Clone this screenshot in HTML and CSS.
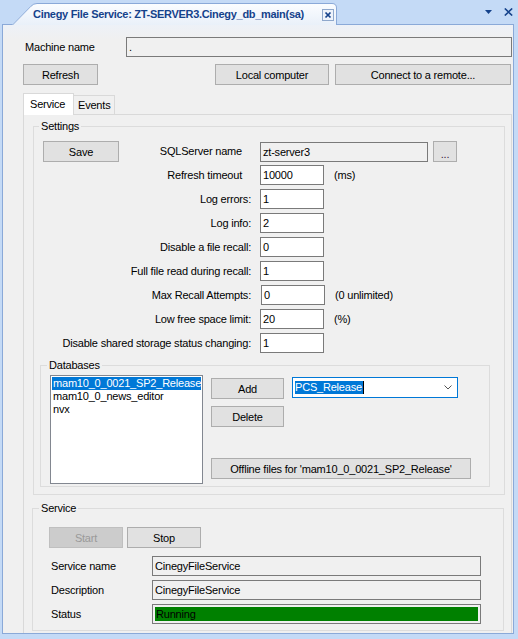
FILE: index.html
```html
<!DOCTYPE html>
<html>
<head>
<meta charset="utf-8">
<title>Cinegy File Service</title>
<link rel="stylesheet" href="styles.css">
</head>
<body>
<div class="titlebar">
  <div class="strip">
    <div class="doctab">
      <svg class="doctab-bg" width="325" height="22" viewBox="0 0 325 22">
        <defs>
          <linearGradient id="tg" x1="0" y1="0" x2="0" y2="1">
            <stop offset="0" stop-color="#fbfdff"/>
            <stop offset="1" stop-color="#e9f0f9"/>
          </linearGradient>
        </defs>
        <path d="M0,22 L19,3 Q21.5,0.5 25,0.5 L320,0.5 Q324.5,0.5 324.5,5 L324.5,22 Z" fill="url(#tg)"/>
        <path d="M0.5,22 L19,3.2 Q21.5,0.5 25,0.5 L320,0.5 Q324.5,0.5 324.5,5 L324.5,22" fill="none" stroke="#8aa9d8"/>
      </svg>
      <span class="doctab-title">Cinegy File Service: ZT-SERVER3.Cinegy_db_main(sa)</span>
      <span class="doctab-close">
        <svg width="8" height="8" viewBox="0 0 8 8"><path d="M1.5,1.5 L6.5,6.5 M6.5,1.5 L1.5,6.5" stroke="#15428b" stroke-width="1.7"/></svg>
      </span>
    </div>
    <div class="strip-tools">
      <svg class="tool-drop" width="7" height="4" viewBox="0 0 7 4"><path d="M0,0 L7,0 L3.5,4 Z" fill="#15428b"/></svg>
      <svg class="tool-close" width="9" height="8" viewBox="0 0 9 8"><path d="M0.8,0.5 L8.2,7.5 M8.2,0.5 L0.8,7.5" stroke="#15428b" stroke-width="1.6"/></svg>
    </div>
  </div>
</div>

<div class="window">
  <div class="main">
    <div class="machine-row">
      <span class="machine-label">Machine name</span>
      <div class="field field-ro machine-field">.</div>
    </div>

    <div class="btn-row">
      <button class="btn btn-refresh">Refresh</button>
      <button class="btn btn-local">Local computer</button>
      <button class="btn btn-connect">Connect to a remote...</button>
    </div>

    <div class="tabs">
      <div class="tab tab-active">Service</div>
      <div class="tab tab-inactive">Events</div>
    </div>

    <div class="tabpage">
      <fieldset class="group group-settings">
        <legend class="group-legend legend-settings">Settings</legend>
        <div class="settings-body">
          <div class="frow frow-first">
            <div class="flabel flabel-narrow flabel-save">
              <button class="btn btn-save">Save</button>
              <span class="label-raised">SQLServer name</span>
            </div>
            <div class="field field-ro field-sql">zt-server3</div>
            <button class="btn btn-browse">...</button>
          </div>
          <div class="frow frow-second">
            <div class="flabel flabel-narrow">Refresh timeout</div>
            <div class="field field-num">10000</div>
            <span class="unit">(ms)</span>
          </div>
          <div class="frow">
            <div class="flabel">Log errors:</div>
            <div class="field field-num">1</div>
          </div>
          <div class="frow">
            <div class="flabel">Log info:</div>
            <div class="field field-num">2</div>
          </div>
          <div class="frow">
            <div class="flabel">Disable a file recall:</div>
            <div class="field field-num">0</div>
          </div>
          <div class="frow">
            <div class="flabel">Full file read during recall:</div>
            <div class="field field-num">1</div>
          </div>
          <div class="frow">
            <div class="flabel">Max Recall Attempts:</div>
            <div class="field field-num field-shift">0</div>
            <span class="unit">(0 unlimited)</span>
          </div>
          <div class="frow">
            <div class="flabel">Low free space limit:</div>
            <div class="field field-num">20</div>
            <span class="unit">(%)</span>
          </div>
          <div class="frow">
            <div class="flabel">Disable shared storage status changing:</div>
            <div class="field field-num">1</div>
          </div>

          <fieldset class="group group-db">
            <legend class="group-legend legend-db">Databases</legend>
            <div class="db-body">
              <div class="listbox">
                <div class="lb-item lb-selected">mam10_0_0021_SP2_Release</div>
                <div class="lb-item">mam10_0_news_editor</div>
                <div class="lb-item">nvx</div>
              </div>
              <div class="db-actions">
                <div class="db-add-row">
                  <button class="btn btn-db">Add</button>
                  <div class="combo">
                    <span class="combo-sel">PCS_Release</span><span class="caret"></span>
                    <svg class="combo-chevron" width="8" height="5" viewBox="0 0 8 5"><path d="M0.5,0.5 L4,4 L7.5,0.5" fill="none" stroke="#555" stroke-width="1"/></svg>
                  </div>
                </div>
                <button class="btn btn-db btn-delete">Delete</button>
                <button class="btn btn-offline">Offline files for 'mam10_0_0021_SP2_Release'</button>
              </div>
            </div>
          </fieldset>
        </div>
      </fieldset>

      <fieldset class="group group-service">
        <legend class="group-legend legend-service">Service</legend>
        <div class="service-body">
          <div class="svc-buttons">
            <button class="btn btn-svc btn-disabled">Start</button>
            <button class="btn btn-svc btn-stop">Stop</button>
          </div>
          <div class="srow srow-first">
            <span class="slabel">Service name</span>
            <div class="field field-ro field-svc">CinegyFileService</div>
          </div>
          <div class="srow">
            <span class="slabel">Description</span>
            <div class="field field-ro field-svc">CinegyFileService</div>
          </div>
          <div class="srow">
            <span class="slabel">Status</span>
            <div class="field field-ro field-svc field-status"><div class="status-fill">Running</div></div>
          </div>
        </div>
      </fieldset>
    </div>
  </div>
</div>
</body>
</html>
```

FILE: styles.css
```css
* {
  box-sizing: border-box;
}

html, body {
  margin: 0;
  padding: 0;
}

body {
  width: 518px;
  height: 639px;
  overflow: hidden;
  background: #c4daf6;
  font-family: "Liberation Sans", Arial, sans-serif;
  font-size: 11px;
  letter-spacing: -0.2px;
  color: #000;
}

/* ---------- title strip ---------- */
.titlebar {
  height: 25px;
  padding: 0 4px 0 2px;
}

.strip {
  height: 25px;
  display: flex;
  align-items: flex-end;
  padding-left: 10px;
  border-bottom: 1px solid #8aa9d8;
}

.doctab {
  position: relative;
  width: 325px;
  height: 22px;
  margin-bottom: -1px;
  display: flex;
  align-items: center;
  justify-content: space-between;
  padding: 0 3px 0 21px;
}

.doctab-bg {
  position: absolute;
  left: 0;
  top: 0;
}

.doctab-title {
  position: relative;
  font-weight: bold;
  color: #15428b;
  letter-spacing: -0.3px;
  line-height: 14px;
}

.doctab-close {
  position: relative;
  width: 12px;
  height: 12px;
  margin-top: 1px;
  border: 1px solid #8fa8cc;
  background: #eef3fb;
  display: flex;
  align-items: center;
  justify-content: center;
}

.strip-tools {
  margin-left: auto;
  height: 24px;
  display: flex;
  align-items: center;
  padding-right: 1px;
}

.tool-drop {
  margin-right: 12px;
}

/* ---------- window ---------- */
.window {
  height: 609px;
  margin: 0 4px 0 2px;
  border: 1px solid #8aa9d8;
  border-top: none;
  background: linear-gradient(#edf1f7, #f0f0f0 14px);
  overflow: hidden;
}

.main {
  padding: 12px 1px 0 20px;
}

.machine-row {
  display: flex;
  align-items: center;
  height: 20px;
}

.machine-label {
  padding-left: 2px;
}

.machine-field {
  margin-left: auto;
  width: 386px;
}

/* ---------- fields & buttons ---------- */
.field {
  height: 20px;
  border: 1px solid #7a7a7a;
  background: #fff;
  padding: 0 2px;
  display: flex;
  align-items: center;
  white-space: nowrap;
  flex: none;
}

.field-ro {
  background: #f0f0f0;
}

.btn {
  height: 21px;
  border: 1px solid #adadad;
  background: #e1e1e1;
  font-family: inherit;
  font-size: 11px;
  letter-spacing: -0.2px;
  color: #000;
  padding: 0;
  margin: 0;
  flex: none;
  white-space: nowrap;
}

.btn-disabled {
  background: #cccccc;
  border-color: #bfbfbf;
  color: #9a9a9a;
}

.btn-row {
  display: flex;
  margin-top: 7px;
  padding-right: 1px;
}

.btn-refresh {
  width: 75px;
}

.btn-local {
  width: 114px;
  margin-left: auto;
}

.btn-connect {
  width: 176px;
  margin-left: 6px;
}

/* ---------- tab control ---------- */
.tabs {
  display: flex;
  align-items: flex-end;
  height: 21px;
  margin-top: 8px;
}

.tab {
  border: 1px solid #d9d9d9;
  border-bottom: none;
  display: flex;
  align-items: center;
}

.tab-active {
  position: relative;
  z-index: 1;
  width: 51px;
  height: 22px;
  margin-bottom: -1px;
  background: #fff;
  padding: 0 0 2px 6px;
}

.tab-inactive {
  width: 41px;
  height: 19px;
  border-left: none;
  background: #f0f0f0;
  padding: 0 0 0 4px;
}

.tabpage {
  height: 540px;
  border: 1px solid #d9d9d9;
  background: #f0f0f0;
  padding-top: 4px;
}

/* ---------- group boxes ---------- */
.group {
  margin: 0;
  padding: 0;
  border: 1px solid #dcdcdc;
  min-width: 0;
}

.group-legend {
  padding: 0 2px;
  line-height: 14px;
  font-size: 11px;
}

.group-settings {
  width: 472px;
  margin-left: 9px;
}

.legend-settings {
  margin-left: 5px;
}

.settings-body {
  padding: 8px 0 7px 9px;
}

.frow {
  display: flex;
  align-items: center;
  height: 20px;
  margin-top: 4px;
}

.frow-first {
  height: 21px;
  margin-top: 0;
}

.frow-second {
  margin-top: 3px;
}

.flabel {
  width: 208px;
  flex: none;
  text-align: right;
  white-space: nowrap;
}

.flabel-narrow {
  padding-right: 9px;
}

.flabel-save {
  display: flex;
  align-items: center;
  justify-content: space-between;
}

.label-raised {
  margin-top: -2px;
}

.btn-save {
  width: 76px;
}

.frow .field {
  margin-left: 9px;
}

.field-num {
  width: 64px;
}

.frow .field-shift {
  margin-left: 10px;
}

.field-sql {
  width: 168px;
}

.btn-browse {
  width: 24px;
  margin-left: 5px;
  padding-top: 4px;
  line-height: 10px;
  color: #3a1f3a;
}

.unit {
  margin-left: 10px;
}

/* ---------- databases ---------- */
.group-db {
  width: 450px;
  margin: 5px 0 0 -3px;
}

.legend-db {
  margin-left: 6px;
}

.db-body {
  display: flex;
  padding: 3px 0 2px 9px;
}

.listbox {
  width: 153px;
  height: 109px;
  border: 1px solid #828790;
  background: #fff;
  padding: 1px;
  flex: none;
}

.lb-item {
  height: 13px;
  line-height: 13px;
  padding-left: 1px;
  white-space: nowrap;
  overflow: hidden;
}

.lb-selected {
  background: #0078d7;
  color: #fff;
}

.db-actions {
  display: flex;
  flex-direction: column;
  align-items: flex-start;
  margin-left: 8px;
}

.db-add-row {
  display: flex;
  align-items: flex-start;
  margin-top: 3px;
}

.btn-db {
  width: 73px;
}

.btn-delete {
  margin-top: 7px;
}

.combo {
  width: 166px;
  height: 21px;
  margin: -1px 0 0 8px;
  border: 1px solid #0078d7;
  background: #fff;
  display: flex;
  align-items: center;
  padding: 0 5px 0 2px;
}

.combo-sel {
  background: #0078d7;
  color: #fff;
  line-height: 13px;
  padding-right: 1px;
}

.caret {
  width: 1px;
  height: 13px;
  background: #000;
}

.combo-chevron {
  margin-left: auto;
}

.btn-offline {
  width: 260px;
  margin-top: 31px;
}

/* ---------- service ---------- */
.group-service {
  width: 472px;
  margin: 6px 0 0 8px;
}

.legend-service {
  margin-left: 6px;
}

.service-body {
  padding: 12px 0 6px 16px;
}

.svc-buttons {
  display: flex;
}

.btn-svc {
  width: 74px;
}

.btn-stop {
  margin-left: 4px;
}

.srow {
  display: flex;
  align-items: center;
  height: 20px;
  margin-top: 4px;
}

.srow-first {
  margin-top: 8px;
}

.slabel {
  width: 103px;
  flex: none;
  padding-left: 2px;
}

.field-svc {
  width: 329px;
}

.field-status {
  padding: 2px;
  align-items: stretch;
}

.status-fill {
  flex: 1;
  background: #008000;
  color: #000;
  display: flex;
  align-items: center;
  padding-left: 1px;
}
```
